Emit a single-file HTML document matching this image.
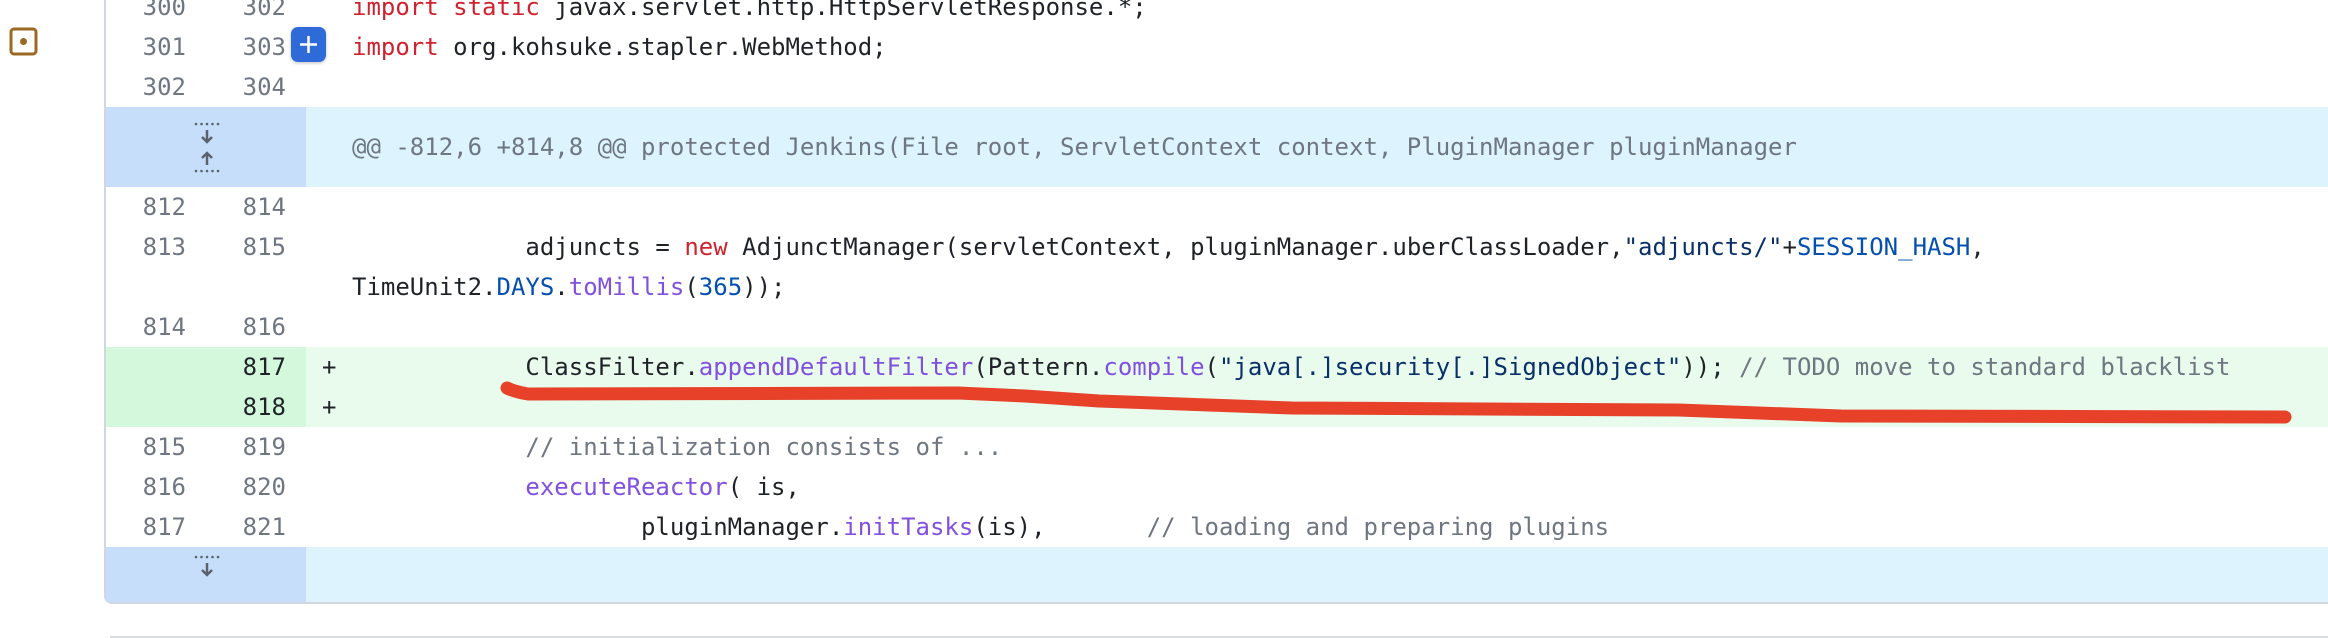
<!DOCTYPE html>
<html><head><meta charset="utf-8"><style>
body{margin:0;width:2328px;height:638px;background:#fff;position:relative;overflow:hidden;font-family:"DejaVu Sans Mono","Liberation Mono",monospace;}
.box{position:absolute;left:104px;top:-20px;width:2300px;height:622px;border-left:2px solid #d0d7de;border-bottom:2px solid #d0d7de;border-bottom-left-radius:8px;overflow:hidden}
.r{position:absolute;left:106px;width:2222px;height:40px;font-size:24px;line-height:40px;white-space:pre;color:#1f2328}
.n1,.n2{position:absolute;top:0;width:70px;text-align:right;color:#6e7781}
.n1{left:10px}.n2{left:110px}
.c{position:absolute;left:246px;top:0}
.g{position:absolute;left:0;top:0;width:200px;height:100%}
.add{background:#e8fbec}.add .g{background:#d4f8db}.add .n2{color:#1f2328}
.hk{background:#ddf4ff}.hk .g{background:#c6defa}
.k{color:#cf222e}.f{color:#8250df}.b{color:#0550ae}.s{color:#0a3069}.cm{color:#6e7781}
.pm{position:absolute;left:216px;top:0}
</style></head><body>
<svg style="position:absolute;left:9px;top:27px" width="30" height="30"><rect x="2" y="2" width="25" height="25" rx="3" fill="none" stroke="#9a6a22" stroke-width="3"/><circle cx="14.5" cy="14.5" r="3.5" fill="#9a6a22"/></svg>
<div class="box"></div>
<div class="r" style="top:-13px"><span class="n1">300</span><span class="n2">302</span><span class="c"><span class="k">import static</span> javax.servlet.http.HttpServletResponse.*;</span></div>
<div class="r" style="top:27px"><span class="n1">301</span><span class="n2">303</span><span class="c"><span class="k">import</span> org.kohsuke.stapler.WebMethod;</span></div>
<div class="r" style="top:67px"><span class="n1">302</span><span class="n2">304</span></div>
<div class="r hk" style="top:107px;height:80px"><div class="g"></div>
<svg style="position:absolute;left:86px;top:8px" width="30" height="64"><g fill="#59636e"><circle cx="4" cy="9" r="1.3"/><circle cx="9.5" cy="9" r="1.3"/><circle cx="15" cy="9" r="1.3"/><circle cx="20.5" cy="9" r="1.3"/><circle cx="26" cy="9" r="1.3"/><circle cx="4" cy="56" r="1.3"/><circle cx="9.5" cy="56" r="1.3"/><circle cx="15" cy="56" r="1.3"/><circle cx="20.5" cy="56" r="1.3"/><circle cx="26" cy="56" r="1.3"/></g><path d="M15 15v11M10 22l5 5 5-5M15 50V39M10 43l5-5 5 5" stroke="#59636e" stroke-width="2.5" fill="none"/></svg>
<span class="c cm" style="line-height:80px">@@ -812,6 +814,8 @@ protected Jenkins(File root, ServletContext context, PluginManager pluginManager</span></div>
<div class="r" style="top:187px"><span class="n1">812</span><span class="n2">814</span></div>
<div class="r" style="top:227px;height:80px"><span class="n1">813</span><span class="n2">815</span><span class="c">            adjuncts = <span class="k">new</span> AdjunctManager(servletContext, pluginManager.uberClassLoader,<span class="s">"adjuncts/"</span>+<span class="b">SESSION_HASH</span>,
TimeUnit2.<span class="b">DAYS</span>.<span class="f">toMillis</span>(<span class="b">365</span>));</span></div>
<div class="r" style="top:307px"><span class="n1">814</span><span class="n2">816</span></div>
<div class="r add" style="top:347px"><div class="g"></div><span class="n2">817</span><span class="pm">+</span><span class="c">            ClassFilter.<span class="f">appendDefaultFilter</span>(Pattern.<span class="f">compile</span>(<span class="s">"java[.]security[.]SignedObject"</span>)); <span class="cm">// TODO move to standard blacklist</span></span></div>
<div class="r add" style="top:387px"><div class="g"></div><span class="n2">818</span><span class="pm">+</span></div>
<div class="r" style="top:427px"><span class="n1">815</span><span class="n2">819</span><span class="c cm">            // initialization consists of ...</span></div>
<div class="r" style="top:467px"><span class="n1">816</span><span class="n2">820</span><span class="c">            <span class="f">executeReactor</span>( is,</span></div>
<div class="r" style="top:507px"><span class="n1">817</span><span class="n2">821</span><span class="c">                    pluginManager.<span class="f">initTasks</span>(is),       <span class="cm">// loading and preparing plugins</span></span></div>
<div class="r hk" style="top:547px;height:55px;border-bottom-left-radius:6px"><div class="g"></div>
<svg style="position:absolute;left:86px;top:6px" width="30" height="30"><g fill="#59636e"><circle cx="4" cy="4" r="1.3"/><circle cx="9.5" cy="4" r="1.3"/><circle cx="15" cy="4" r="1.3"/><circle cx="20.5" cy="4" r="1.3"/><circle cx="26" cy="4" r="1.3"/></g><path d="M15 10v11M10 17l5 5 5-5" stroke="#59636e" stroke-width="2.5" fill="none"/></svg></div>
<div style="position:absolute;left:291px;top:27px;width:35px;height:35px;border-radius:7px;background:#2f6bd8;box-shadow:0 1px 3px rgba(0,0,0,.25)"><svg width="35" height="35"><path d="M17.5 9v17M9 17.5h17" stroke="#fff" stroke-width="2.5"/></svg></div>
<div style="position:absolute;left:110px;top:636px;width:2218px;height:2px;background:#d8dde2"></div>
<svg style="position:absolute;left:0;top:0" width="2328" height="638"><path d="M507 388 Q515 392 528 394 L958 393 L1025 396 L1099 401 L1292 408 L1678 410 L1841 416 L2285 417" stroke="#e8412a" stroke-width="13" fill="none" stroke-linecap="round" stroke-linejoin="round"/></svg>
</body></html>
